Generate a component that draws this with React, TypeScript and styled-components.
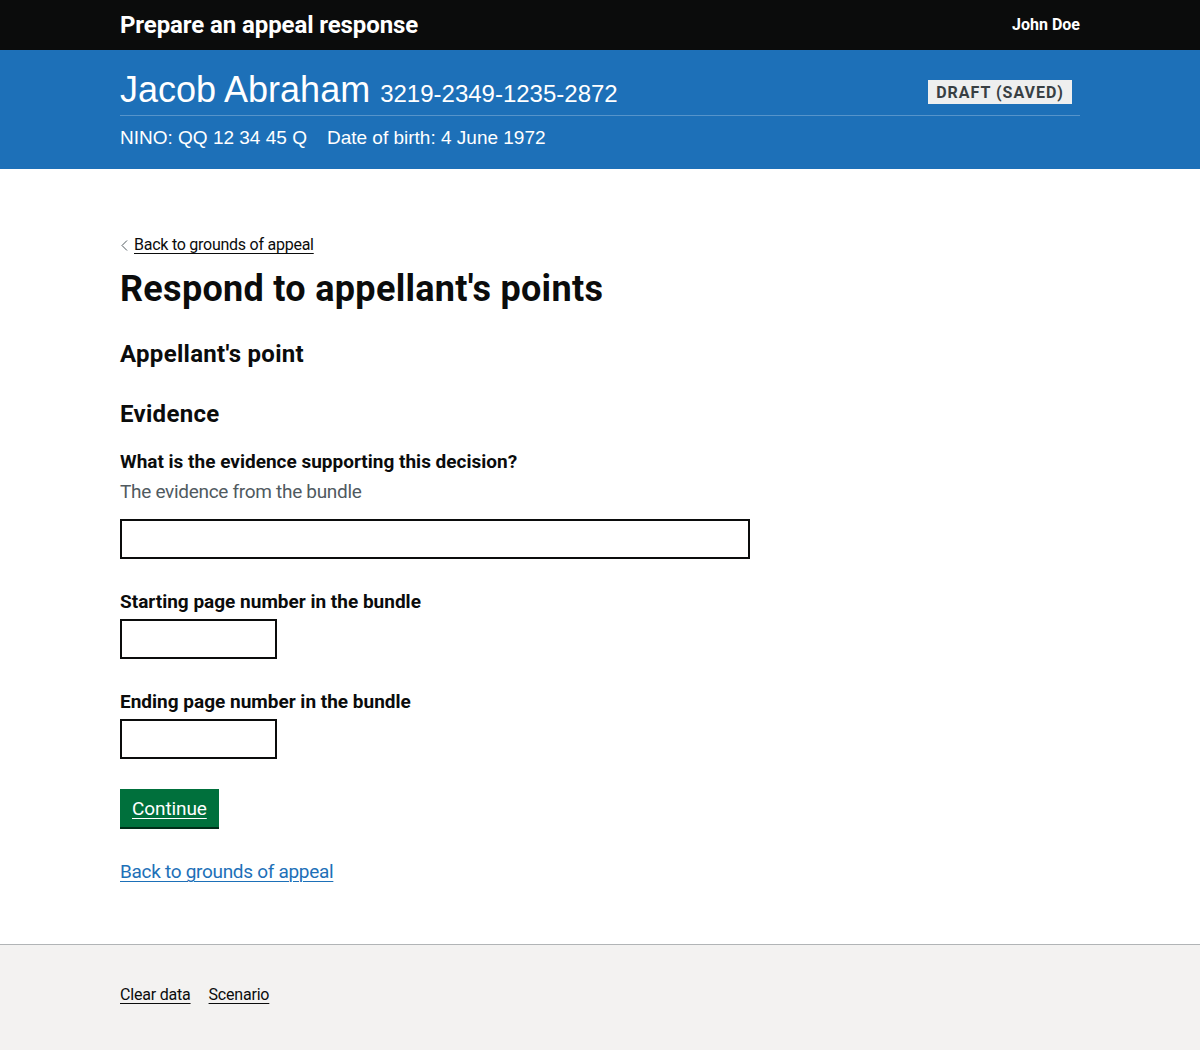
import React, { ReactElement } from 'react';
import styled, { createGlobalStyle } from 'styled-components';

const GlobalStyle = createGlobalStyle`
  html, body {
    margin: 0;
    padding: 0;
    background: #ffffff;
  }

  body {
    font-family: Roboto, "Liberation Sans", Arial, sans-serif;
    color: #0b0c0c;
    -webkit-font-smoothing: antialiased;
  }

  * {
    box-sizing: border-box;
  }
`;

type Field = {
  id: string;
  label: string;
  hint?: string;
  width: number;
};

const fields: Field[] = [
  {
    id: 'evidence',
    label: 'What is the evidence supporting this decision?',
    hint: 'The evidence from the bundle',
    width: 630,
  },
  { id: 'start-page', label: 'Starting page number in the bundle', width: 157 },
  { id: 'end-page', label: 'Ending page number in the bundle', width: 157 },
];

function App(): ReactElement {
  return (
    <Page>
      <GlobalStyle />

      <Header>
        <Container>
          <ServiceName>Prepare an appeal response</ServiceName>
          <UserName>John Doe</UserName>
        </Container>
      </Header>

      <Banner>
        <Container>
          <BannerTop>
            <Claimant>
              <ClaimantName>Jacob Abraham</ClaimantName>
              <ClaimReference>3219-2349-1235-2872</ClaimReference>
            </Claimant>
            <Tag>Draft (saved)</Tag>
          </BannerTop>
          <BannerDetails>
            <span>NINO: QQ 12 34 45 Q</span>
            <span>Date of birth: 4 June 1972</span>
          </BannerDetails>
        </Container>
      </Banner>

      <Main>
        <Container>
          <BackLink href="#">
            <svg width="7" height="11" viewBox="0 0 7 11" aria-hidden="true">
              <path
                d="M6 0.5 L1 5.5 L6 10.5"
                fill="none"
                stroke="#505a5f"
                strokeWidth="1"
              />
            </svg>
            <span>Back to grounds of appeal</span>
          </BackLink>

          <HeadingL>Respond to appellant's points</HeadingL>
          <HeadingM>Appellant's point</HeadingM>
          <HeadingM>Evidence</HeadingM>

          <form onSubmit={(e) => e.preventDefault()}>
            {fields.map((field) => (
              <FormGroup key={field.id}>
                <Label htmlFor={field.id}>{field.label}</Label>
                {field.hint && <Hint>{field.hint}</Hint>}
                <Input id={field.id} type="text" $width={field.width} />
              </FormGroup>
            ))}

            <Button type="submit">Continue</Button>
          </form>

          <TextLink href="#">Back to grounds of appeal</TextLink>
        </Container>
      </Main>

      <Footer>
        <Container>
          <FooterLinks>
            <li>
              <FooterLink href="#">Clear data</FooterLink>
            </li>
            <li>
              <FooterLink href="#">Scenario</FooterLink>
            </li>
          </FooterLinks>
        </Container>
      </Footer>
    </Page>
  );
}

const Page = styled.div`
  min-height: 100vh;
  display: flex;
  flex-direction: column;
`;

const Container = styled.div`
  width: 960px;
  margin: 0 auto;
`;

const Header = styled.header`
  background-color: #0b0c0c;
  color: #ffffff;
  height: 50px;

  ${Container} {
    height: 100%;
    display: flex;
    align-items: center;
    justify-content: space-between;
  }
`;

const ServiceName = styled.span`
  font-size: 24px;
  font-weight: 700;
  line-height: 1;
  letter-spacing: -0.1px;
`;

const UserName = styled.span`
  font-size: 16px;
  font-weight: 700;
  line-height: 1;
`;

const Banner = styled.div`
  background-color: #1d70b8;
  color: #ffffff;
  font-family: "Liberation Sans", Arial, sans-serif;
  padding: 17px 0 19px;
`;

const BannerTop = styled.div`
  display: flex;
  justify-content: space-between;
  align-items: flex-start;
  padding-bottom: 3px;
  border-bottom: 1px solid #5694ca;
`;

const Claimant = styled.div`
  display: flex;
  align-items: baseline;
  gap: 10px;
`;

const ClaimantName = styled.span`
  font-size: 36px;
  line-height: 45px;
`;

const ClaimReference = styled.span`
  font-size: 24px;
`;

const Tag = styled.strong`
  margin: 13px 8px 0 0;
  padding: 4px 8px 3px;
  background-color: #eeefef;
  color: #383f43;
  font-family: Roboto, "Liberation Sans", sans-serif;
  font-size: 16px;
  line-height: 17px;
  font-weight: 700;
  letter-spacing: 1px;
  text-transform: uppercase;
`;

const BannerDetails = styled.div`
  display: flex;
  gap: 20px;
  padding-top: 9px;
  font-size: 19px;
  line-height: 25px;
`;

const Main = styled.main`
  padding: 66px 0 60px;
`;

const BackLink = styled.a`
  display: inline-flex;
  align-items: center;
  gap: 6px;
  padding-left: 1px;
  font-size: 16px;
  line-height: 20px;
  letter-spacing: -0.25px;
  color: #0b0c0c;
  text-decoration: underline;
  text-decoration-thickness: 1px;
  text-underline-offset: 0.16em;
`;

const HeadingL = styled.h1`
  margin: 14px 0 30px;
  font-size: 36px;
  line-height: 40px;
  font-weight: 700;
  letter-spacing: 0.3px;
`;

const HeadingM = styled.h2`
  margin: 0 0 30px;
  font-size: 24px;
  line-height: 30px;
  font-weight: 700;
  letter-spacing: 0.3px;
`;

const FormGroup = styled.div`
  margin-bottom: 30px;

  &:first-child {
    margin-top: -10px;
  }
`;

const Label = styled.label`
  display: block;
  margin-bottom: 5px;
  font-size: 19px;
  line-height: 25px;
  font-weight: 700;
`;

const Hint = styled.div`
  margin-bottom: 15px;
  font-size: 19px;
  line-height: 25px;
  letter-spacing: -0.3px;
  color: #505a5f;
`;

type InputProps = {
  $width: number;
};
const Input = styled.input<InputProps>`
  display: block;
  width: ${(p) => p.$width}px;
  height: 40px;
  margin: 0;
  padding: 5px;
  border: 2px solid #0b0c0c;
  border-radius: 0;
  font-family: inherit;
  font-size: 19px;
  background: #ffffff;
  outline: none;
`;

const Button = styled.button`
  display: inline-block;
  margin: 0 0 32px;
  padding: 8px 10px 7px;
  border: 2px solid transparent;
  border-radius: 0;
  background-color: #00703c;
  box-shadow: 0 2px 0 #002d18;
  color: #ffffff;
  font-family: inherit;
  font-size: 19px;
  line-height: 1;
  letter-spacing: -0.1px;
  text-decoration: underline;
  text-decoration-thickness: 1px;
  text-underline-offset: 0.16em;
  cursor: pointer;
`;

const TextLink = styled.a`
  display: block;
  width: fit-content;
  font-size: 19px;
  line-height: 25px;
  letter-spacing: -0.3px;
  color: #1d70b8;
  text-decoration: underline;
  text-decoration-thickness: 1px;
  text-underline-offset: 0.16em;
`;

const Footer = styled.footer`
  flex: 1;
  background-color: #f3f2f1;
  border-top: 1px solid #b1b4b6;
  padding: 40px 0 25px;
`;

const FooterLinks = styled.ul`
  display: flex;
  gap: 18px;
  margin: 0;
  padding: 0;
  list-style: none;
`;

const FooterLink = styled.a`
  font-size: 16px;
  line-height: 20px;
  letter-spacing: -0.2px;
  color: #0b0c0c;
  text-decoration: underline;
  text-decoration-thickness: 1px;
  text-underline-offset: 0.16em;
`;

export default App;
